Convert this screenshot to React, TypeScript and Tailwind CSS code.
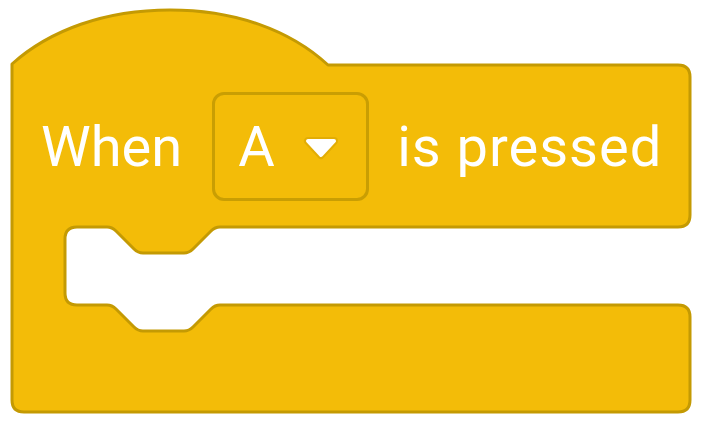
import React from "react";

const BLOCK_FILL = "#f3bc08";
const BLOCK_STROKE = "#c49a03";

// outline of the hat block with its C-shaped mouth
const blockPath = [
  "M 12 64",
  "C 50 30, 105 10, 170 10",
  "C 235 10, 290 30, 328 65",
  "L 678 65 Q 690 65 690 77",
  "L 690 215 Q 690 227 678 227",
  // notch on the underside of the top arm
  "L 220 227 Q 215 227 211 231",
  "L 193 249 Q 189 253 184 253",
  "L 143 253 Q 138 253 134 249",
  "L 116 231 Q 112 227 107 227",
  "L 77 227 Q 65 227 65 239",
  "L 65 293 Q 65 305 77 305",
  // notch on the bottom arm
  "L 107 305 Q 112 305 116 309",
  "L 134 327 Q 138 331 143 331",
  "L 184 331 Q 189 331 193 327",
  "L 211 309 Q 215 305 220 305",
  "L 678 305 Q 690 305 690 317",
  "L 690 400 Q 690 412 678 412",
  "L 24 412 Q 12 412 12 400",
  "Z",
].join(" ");

const DropArrow = () => (
  <svg width="36" height="24" viewBox="0 0 36 24">
    <path
      d="M5 5 H31 L18 19 Z"
      fill="#e2ad05"
      stroke="#e2ad05"
      strokeWidth="8"
      strokeLinejoin="round"
    />
    <path
      d="M5 5 H31 L18 19 Z"
      fill="#ffffff"
      stroke="#ffffff"
      strokeWidth="4"
      strokeLinejoin="round"
    />
  </svg>
);

export default function App() {
  return (
    <div
      className="relative w-[704px] h-[423px] bg-white overflow-hidden"
      style={{ fontFamily: "Roboto, 'Noto Sans', sans-serif" }}
    >
      <svg
        className="absolute inset-0"
        width="704"
        height="423"
        viewBox="0 0 704 423"
      >
        <path
          d={blockPath}
          fill={BLOCK_FILL}
          stroke={BLOCK_STROKE}
          strokeWidth="3"
          strokeLinejoin="round"
        />
      </svg>

      <div className="relative flex items-center pt-[92px] pl-[41px] text-white text-[56px] font-normal leading-none">
        <span>When</span>
        <div className="ml-[30px] flex items-center w-[157px] h-[109px] rounded-xl border-[3px] border-[#c49a03]/90 pl-[23px]">
          <span>A</span>
          <span className="ml-[28px] mt-[2px]">
            <DropArrow />
          </span>
        </div>
        <span className="ml-[28px] tracking-[1px]">is pressed</span>
      </div>
    </div>
  );
}
